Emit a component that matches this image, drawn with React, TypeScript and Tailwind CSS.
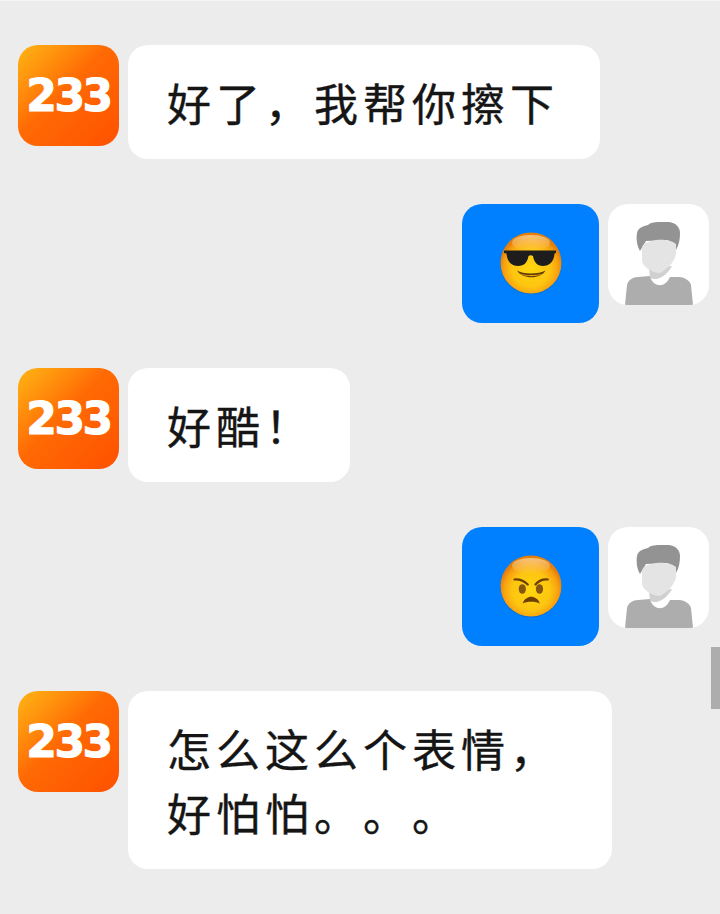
import React from 'react';

const FONT = "font-['Noto_Sans_CJK_SC','Noto_Sans',sans-serif]";

const Logo = () => (
  <div className="flex h-[101px] w-[101px] shrink-0 items-center justify-center rounded-[20px] bg-linear-to-br from-[#ffb515] via-[#ff6a04] via-45% to-[#ff5000]">
    <span className="font-['DejaVu_Sans',sans-serif] text-[44px] leading-none font-bold tracking-[-2.5px] text-white [-webkit-text-stroke:1px_white]">233</span>
  </div>
);

const UserAvatar = () => (
  <div className="h-[101px] w-[101px] shrink-0 overflow-hidden rounded-[20px] bg-white">
    <svg viewBox="0 0 101 101" className="h-full w-full blur-[0.4px]">
      <path d="M17 101 L19 81 C20 76 25 73 30 73 L42 72 C44 82 56 86 62 73 L72 73 C78 74 82 77 83 81 L85 101 Z" fill="#adadad" />
      <path d="M41 64 L42 74 C48 77 57 74 64 62 Z" fill="#d0d0d0" />
      <path d="M32 47 C29 42 28 35 29 29 C30 24 35 22 40 21 C43 18 48 18 54 18 L61 18 C68 19 72 23 72 29 C72 35 71 41 68 46 L60 36 L38 37 Z" fill="#939393" />
      <path d="M34 43 C36 39 39 38 44 37 C50 35 62 35 68 40 L68 50 C67 57 60 65 52 69 C48 69 45 68 42 66 C38 64 34 60 34 56 Z" fill="#e4e4e4" />
    </svg>
  </div>
);

const EmojiDefs = ({ id }: { id: string }) => (
  <defs>
    <radialGradient id={`${id}-face`} cx="50%" cy="58%" r="52%">
      <stop offset="0%" stopColor="#ffd60f" />
      <stop offset="60%" stopColor="#fdc510" />
      <stop offset="86%" stopColor="#f8a010" />
      <stop offset="100%" stopColor="#e57f0a" />
    </radialGradient>
    <linearGradient id={`${id}-shine`} x1="0" y1="0" x2="0" y2="1">
      <stop offset="0%" stopColor="#ffdca0" stopOpacity="0.75" />
      <stop offset="100%" stopColor="#ffdca0" stopOpacity="0" />
    </linearGradient>
  </defs>
);

const CoolEmoji = () => (
  <svg viewBox="0 0 64 64" className="h-[64px] w-[64px] blur-[0.5px]">
    <EmojiDefs id="cool" />
    <circle cx="32" cy="32" r="30.5" fill="#004f9e" opacity="0.4" />
    <circle cx="32" cy="31" r="30.5" fill="url(#cool-face)" />
    <ellipse cx="32" cy="11" rx="19" ry="8" fill="url(#cool-shine)" />
    <path d="M5 18.5 L57 18.5 L57 21 L55.5 21.5 C55 30 50 34 44 34 C38 34 35 30 34 24 C32.5 23 31 23 29.5 24 C28.5 30 25.5 34 19 34 C13 34 8 30 7.5 21.5 L5 21 Z" fill="#1d1d1d" />
    <path d="M18 38.5 C24 42.5 40 42.5 46.5 38.5 C42 47.5 23 47.5 18 38.5 Z" fill="#5f3c08" />
    <path d="M21 41.5 C26 43.5 38 43.5 43.5 41.5 C40 45 25 45 21 41.5 Z" fill="#e8a412" />
  </svg>
);

const AngryEmoji = () => (
  <svg viewBox="0 0 64 64" className="h-[64px] w-[64px] blur-[0.5px]">
    <EmojiDefs id="angry" />
    <circle cx="32" cy="32" r="30.5" fill="#004f9e" opacity="0.4" />
    <circle cx="32" cy="31" r="30.5" fill="url(#angry-face)" />
    <ellipse cx="32" cy="11" rx="19" ry="8" fill="url(#angry-shine)" />
    <path d="M15.5 24.5 C20 24 25 26 28.8 29.5" fill="none" stroke="#6b3f05" strokeWidth="2.2" strokeLinecap="round" />
    <path d="M48.8 24.5 C44 24 39.5 26 36.5 29.5" fill="none" stroke="#6b3f05" strokeWidth="2.2" strokeLinecap="round" />
    <ellipse cx="23.3" cy="34" rx="3.6" ry="4.8" fill="#85560f" />
    <ellipse cx="40.5" cy="34" rx="3.6" ry="4.8" fill="#85560f" />
    <path d="M23.8 48.5 C25 44 29 41.8 32 41.8 C35.5 41.8 39.5 44 40.8 48.5 C37.5 46 27 46 23.8 48.5 Z" fill="#6b3f05" />
  </svg>
);

const TextBubble = ({ lines, className }: { lines: string[]; className?: string }) => (
  <div className={`rounded-[20px] bg-white py-[25px] pl-[39px] text-[44px] leading-[64px] font-normal tracking-[5px] text-[#151515] [text-spacing-trim:space-all] [-webkit-text-stroke:0.4px_#151515] ${FONT} ${className ?? ''}`}>
    {lines.map((line) => (
      <div key={line} className="whitespace-nowrap">{line}</div>
    ))}
  </div>
);

const LeftRow = ({ lines, bubbleClass }: { lines: string[]; bubbleClass: string }) => (
  <div className="flex items-start gap-[9px] pl-[18px]">
    <Logo />
    <TextBubble lines={lines} className={bubbleClass} />
  </div>
);

const RightRow = ({ children }: { children: React.ReactNode }) => (
  <div className="flex items-start justify-end gap-[9px] pr-[11px]">
    <div className="flex h-[119px] w-[137px] items-center justify-center rounded-[20px] bg-[#0080ff]">
      {children}
    </div>
    <UserAvatar />
  </div>
);

export default function App() {
  return (
    <div className="relative h-[914px] w-[720px] overflow-hidden border-t border-t-[#f4f4f4] bg-[#ececec] pt-[44px]">
      <div className="flex flex-col gap-[45px]">
        <LeftRow lines={['好了，我帮你擦下']} bubbleClass="w-[472px]" />
        <RightRow><CoolEmoji /></RightRow>
        <LeftRow lines={['好酷！']} bubbleClass="w-[222px]" />
        <RightRow><AngryEmoji /></RightRow>
        <LeftRow lines={['怎么这么个表情，', '好怕怕。。。']} bubbleClass="w-[484px]" />
      </div>
      {/* scrollbar thumb */}
      <div className="absolute top-[646px] right-0 h-[62px] w-[9px] bg-[#adadad]" />
    </div>
  );
}
